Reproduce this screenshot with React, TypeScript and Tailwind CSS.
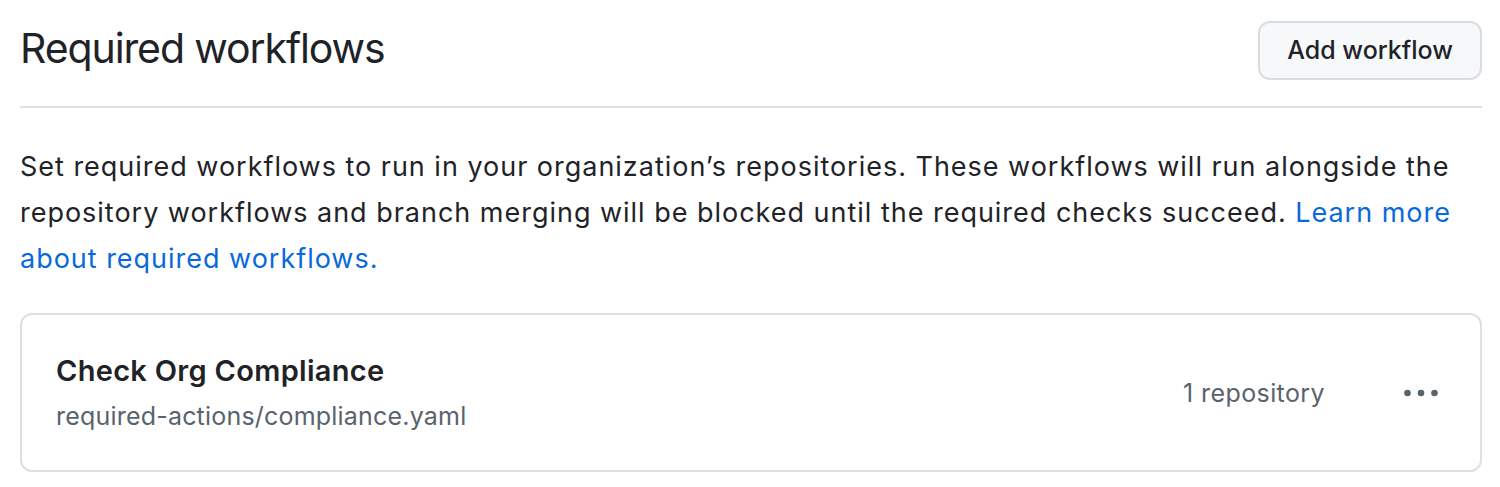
const font = "font-['Inter','Liberation_Sans',sans-serif]";

const KebabDots = () => (
  <svg width="34" height="8" viewBox="0 0 34 8" fill="currentColor">
    <circle cx="3.5" cy="4" r="3.3" />
    <circle cx="17" cy="4" r="3.3" />
    <circle cx="30.5" cy="4" r="3.3" />
  </svg>
);

const RequiredWorkflows = () => {
  return (
    <section className={`${font} pl-5 pr-[18px] pt-[21px] text-[#1f2328] bg-white min-h-screen`}>
      <div className="flex items-start justify-between border-b-2 border-[#dfe2e5] pb-[26px]">
        <h2 className="text-[41px] leading-[52px] tracking-[-1.1px] font-normal pt-[1px]">
          Required workflows
        </h2>
        <button className="h-[59px] px-[27px] rounded-[12px] border-2 border-[#d9dde2] bg-[#f6f8fa] text-[25px] font-medium">
          Add workflow
        </button>
      </div>

      <p className="mt-[36px] text-[27px] leading-[46px] tracking-[0.98px]">
        Set required workflows to run in your organization’s repositories. These workflows will run alongside the
        repository workflows and branch merging will be blocked until the required checks succeed.{" "}
        <a className="text-[#0969da]">Learn more about required workflows.</a>
      </p>

      <div className="mt-[31px] flex items-center justify-between rounded-[12px] border-2 border-[#dcdfe3] h-[159px] pl-[34px] pr-[42px]">
        <div className="flex flex-col">
          <span className="text-[29px] leading-[38px] font-semibold tracking-[0.3px]">
            Check Org Compliance
          </span>
          <span className="text-[25px] leading-[34px] text-[#59636e] mt-[9px] tracking-[0.2px]">
            required-actions/compliance.yaml
          </span>
        </div>
        <div className="flex items-center gap-[79px] text-[#59636e]">
          <span className="text-[25px] tracking-[0.4px] mt-[2px]">1 repository</span>
          <KebabDots />
        </div>
      </div>
    </section>
  );
};

export default function App() {
  return <RequiredWorkflows />;
}
